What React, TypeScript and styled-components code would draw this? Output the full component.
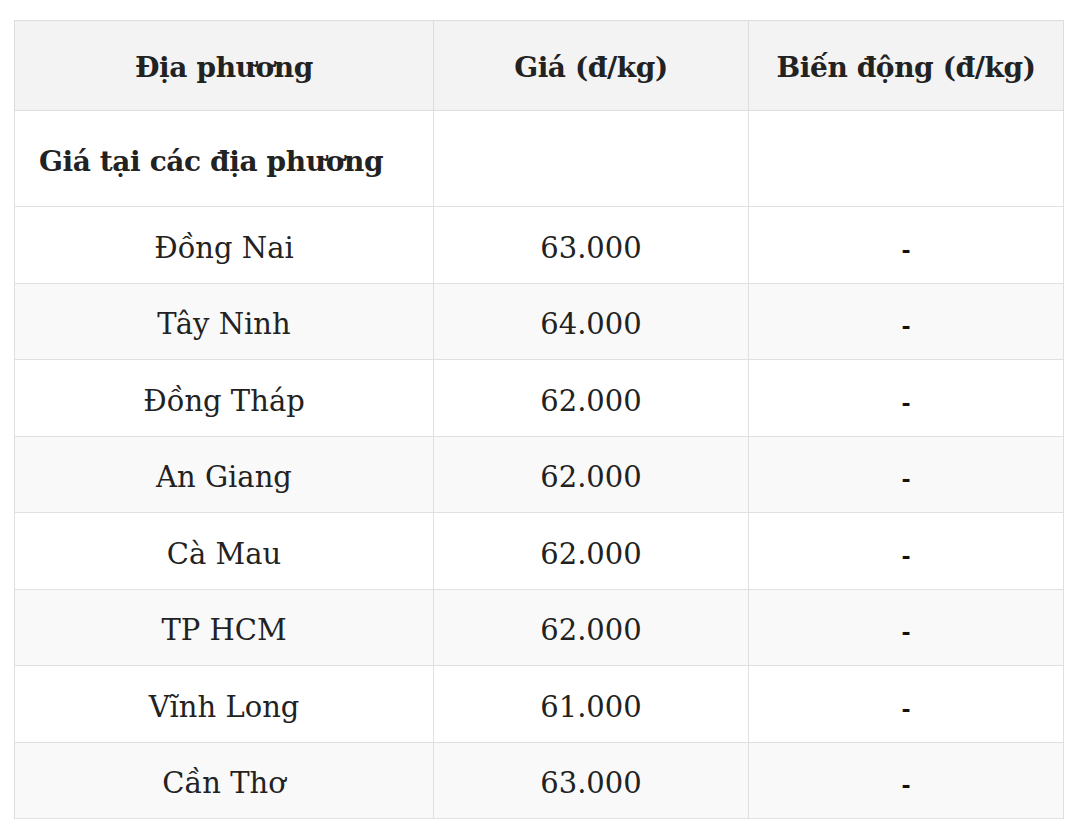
import React from 'react';
import styled, { createGlobalStyle } from 'styled-components';

const GlobalStyle = createGlobalStyle`
  html, body {
    margin: 0;
    padding: 0;
    background: #ffffff;
  }
  body {
    font-family: "DejaVu Serif", "Liberation Serif", serif;
    color: #222222;
  }
`;

const Page = styled.div`
  padding: 20px 16px 0 14px;
`;

const Table = styled.table`
  width: 1050px;
  border-collapse: collapse;
  table-layout: fixed;
  font-size: 29px;

  th, td {
    box-sizing: border-box;
  }
`;

const HeadCell = styled.th<{ $width: number }>`
  width: ${({ $width }) => $width}px;
  height: 90px;
  padding: 4px 8px 0;
  background: #f3f3f3;
  border: 1px solid #dddddd;
  font-weight: 700;
  font-size: 28px;
  text-align: center;
  vertical-align: middle;
  letter-spacing: -0.4px;
  white-space: nowrap;
`;

const Row = styled.tr<{ $striped?: boolean }>`
  background: ${({ $striped }) => ($striped ? '#f9f9f9' : '#ffffff')};
`;

const Cell = styled.td<{ $height?: number }>`
  height: ${({ $height }) => $height ?? 76.5}px;
  padding: 6px 12px 0;
  border: 1px solid #e0e0e0;
  text-align: center;
  vertical-align: middle;
  font-weight: 400;
`;

const SectionCell = styled(Cell)`
  text-align: left;
  padding-left: 24px;
  font-weight: 700;
  font-size: 28px;
  letter-spacing: -0.4px;
`;

const Dash = styled.span`
  font-family: "DejaVu Sans", "Liberation Sans", sans-serif;
  font-weight: 700;
  font-size: 22px;
  color: #111111;
`;

const rows = [
  { place: 'Đồng Nai', price: '63.000' },
  { place: 'Tây Ninh', price: '64.000' },
  { place: 'Đồng Tháp', price: '62.000' },
  { place: 'An Giang', price: '62.000' },
  { place: 'Cà Mau', price: '62.000' },
  { place: 'TP HCM', price: '62.000' },
  { place: 'Vĩnh Long', price: '61.000' },
  { place: 'Cần Thơ', price: '63.000' },
];

const App: React.FC = () => (
  <>
    <GlobalStyle />
    <Page>
      <Table>
        <thead>
          <tr>
            <HeadCell $width={419}>Địa phương</HeadCell>
            <HeadCell $width={315}>Giá (đ/kg)</HeadCell>
            <HeadCell $width={315}>Biến động (đ/kg)</HeadCell>
          </tr>
        </thead>
        <tbody>
          <Row>
            <SectionCell $height={96}>Giá tại các địa phương</SectionCell>
            <Cell $height={96} />
            <Cell $height={96} />
          </Row>
          {rows.map((r, i) => (
            <Row key={r.place} $striped={i % 2 === 1}>
              <Cell>{r.place}</Cell>
              <Cell>{r.price}</Cell>
              <Cell>
                <Dash>-</Dash>
              </Cell>
            </Row>
          ))}
        </tbody>
      </Table>
    </Page>
  </>
);

export default App;
